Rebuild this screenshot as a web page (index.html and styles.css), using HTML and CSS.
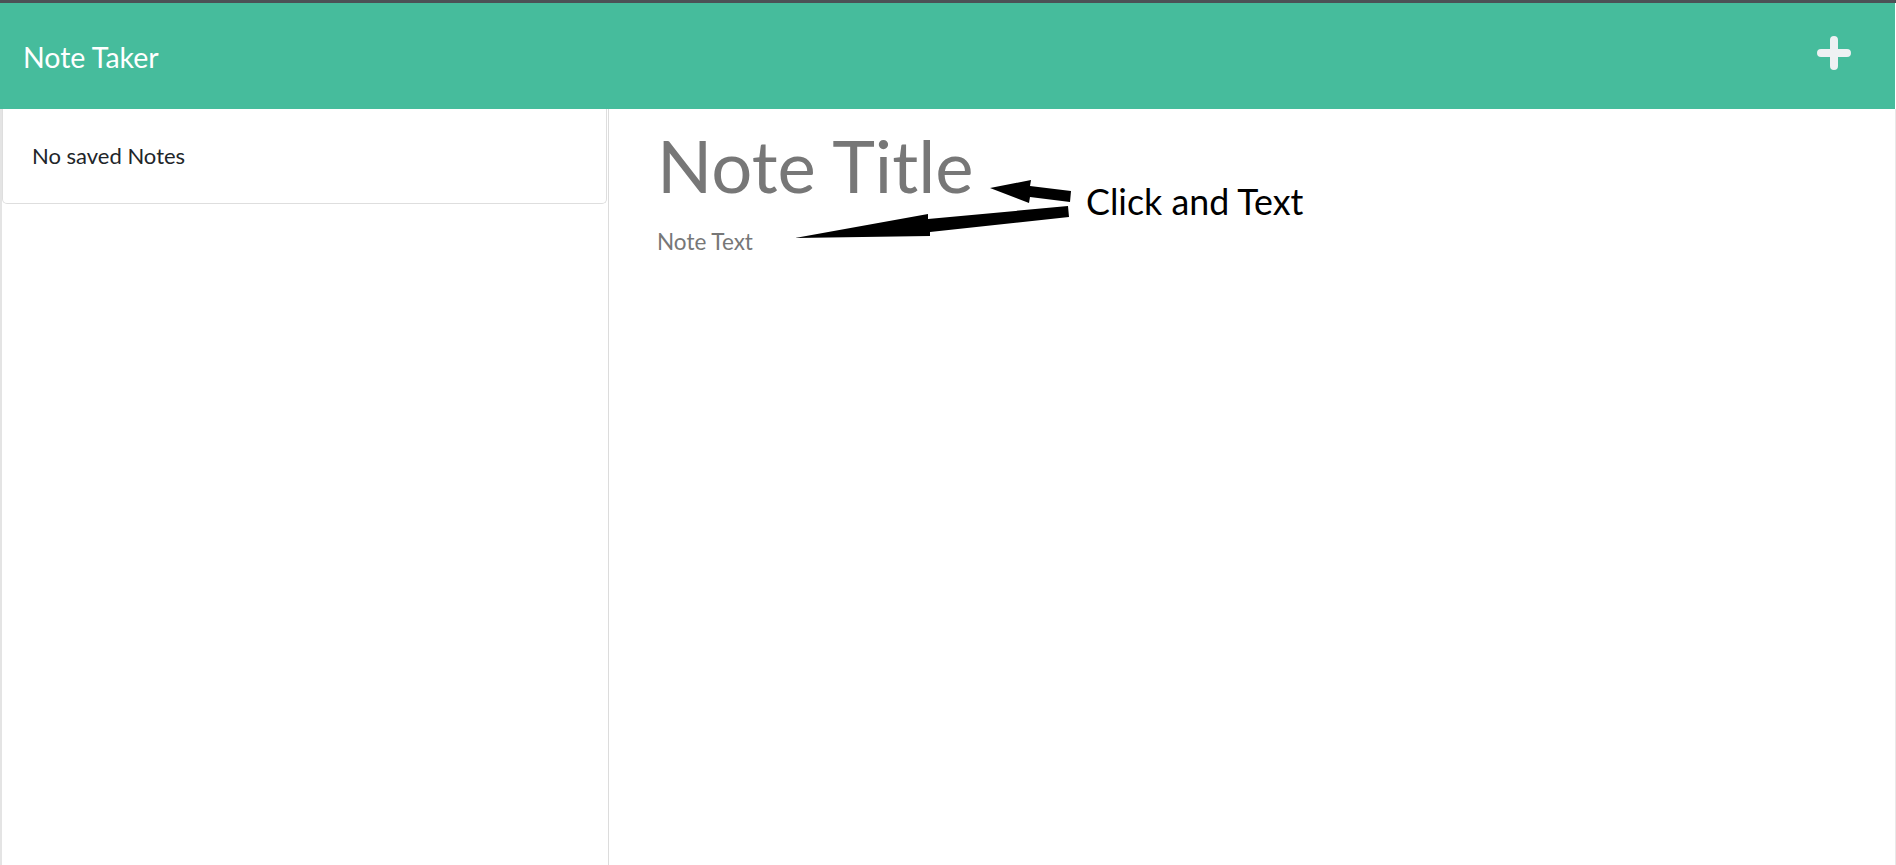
FILE: index.html
```html
<!DOCTYPE html>
<html lang="en">
<head>
<meta charset="utf-8">
<title>Note Taker</title>
<link rel="stylesheet" href="styles.css">
</head>
<body>
<div class="app">
  <div class="topline"></div>
  <header class="navbar">
    <a class="brand">Note Taker</a>
    <span class="new-note" aria-label="New note">
      <svg width="34" height="34" viewBox="0 0 34 34">
        <path d="M17 4 V30 M4 17 H30" stroke="#eef1f3" stroke-width="8" stroke-linecap="round" fill="none"/>
      </svg>
    </span>
  </header>
  <main class="content">
    <aside class="sidebar">
      <ul class="list-group">
        <li class="list-item">No saved Notes</li>
      </ul>
    </aside>
    <section class="editor">
      <div class="note-title">Note Title</div>
      <div class="note-text">Note Text</div>
      <div class="annotation">
        <svg class="arrows" width="300" height="70" viewBox="0 0 300 70">
          <polygon points="200,12 241,4 240,10 281,15 280,26 240,21 239,27" fill="#000"/>
          <polygon points="5,62 138,38 138,43 278,30 279,41 140,56 140,60" fill="#000"/>
        </svg>
        <span class="callout">Click and Text</span>
      </div>
    </section>
  </main>
</div>
</body>
</html>
```
FILE: styles.css
```css
html, body {
  margin: 0;
  padding: 0;
  height: 100%;
  background: #ffffff;
}
body {
  font-family: Lato, "Open Sans", "Liberation Sans", sans-serif;
  overflow: hidden;
}
.app {
  display: flex;
  flex-direction: column;
  height: 865px;
  width: 1896px;
}
.topline {
  height: 3px;
  background: #4c5156;
  flex: none;
}
.navbar {
  flex: none;
  height: 106px;
  width: 1895px;
  background: #46bc9c;
  display: flex;
  align-items: center;
  justify-content: space-between;
  padding: 0 44px 0 23px;
  box-sizing: border-box;
}
.brand {
  color: #ffffff;
  font-size: 28.5px;
  line-height: 1;
  margin-top: 2px;
}
.new-note {
  display: flex;
  margin-top: -6px;
}
.content {
  flex: 1;
  display: flex;
  min-height: 0;
  width: 1896px;
}
.sidebar {
  flex: none;
  width: 606px;
  border-left: 2px solid #e4e4e4;
  border-right: 1px solid #dcdcdc;
}
.list-group {
  list-style: none;
  margin: 0;
  padding: 0;
}
.list-item {
  margin-right: 1px;
  height: 95px;
  box-sizing: border-box;
  border: 1px solid #dedede;
  border-top: 0;
  border-radius: 0 0 5px 5px;
  padding: 33px 0 0 29px;
  font-size: 22px;
  color: #212529;
}
.editor {
  flex: 1;
  position: relative;
  padding: 0 0 0 48px;
  border-right: 1px solid #e8e8e8;
}
.note-title {
  font-size: 72.5px;
  color: #777777;
  line-height: 1;
  margin-top: 20px;
}
.note-text {
  font-size: 22.5px;
  color: #777777;
  margin-top: 26px;
}
.annotation {
  position: absolute;
  left: 181px;
  top: 67px;
  width: 720px;
  height: 70px;
}
.arrows {
  position: absolute;
  left: 0;
  top: 0;
}
.callout {
  position: absolute;
  left: 296px;
  top: 4px;
  font-family: Lato, "Open Sans", sans-serif;
  font-size: 35.8px;
  color: #000000;
  white-space: nowrap;
}
```
